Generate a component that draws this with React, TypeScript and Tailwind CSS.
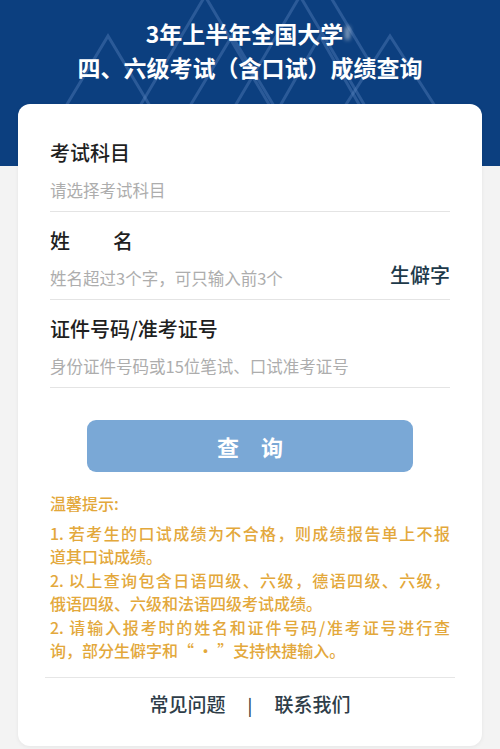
import React from "react";

const font = { fontFamily: '"Noto Sans CJK SC", "Noto Sans", sans-serif' };

const Field = ({
    label,
    placeholder,
    extra,
}: {
    label: React.ReactNode;
    placeholder: string;
    extra?: string;
}) => (
    <div className="border-b border-[#e4e4e4] pt-[15px] pb-[7px]">
        <div className="h-[28px] text-[20px] font-medium leading-[28px] text-[#1f1f1f]">{label}</div>
        <div className="mt-[9px] flex h-[28px] items-center justify-between">
            <span className="text-[16.5px] text-[#adadad]">{placeholder}</span>
            {extra && <span className="-mt-[6px] text-[20px] font-medium text-[#1d3a4a]">{extra}</span>}
        </div>
    </div>
);

const tipLines: { text: string; full: boolean }[] = [
    { text: "1. 若考生的口试成绩为不合格，则成绩报告单上不报", full: true },
    { text: "道其口试成绩。", full: false },
    { text: "2. 以上查询包含日语四级、六级，德语四级、六级，", full: true },
    { text: "俄语四级、六级和法语四级考试成绩。", full: false },
    { text: "2. 请输入报考时的姓名和证件号码/准考证号进行查", full: true },
    { text: "询，部分生僻字和“ · ”支持快捷输入。", full: false },
];

const App = () => {
    return (
        <div className="min-h-[749px] bg-[#f3f3f3]" style={font}>
            {/* blue header */}
            <div className="relative h-[166px] overflow-hidden bg-[#0c3f7f]">
                <svg
                    className="pointer-events-none absolute inset-0"
                    width="500"
                    height="166"
                    viewBox="0 0 500 166"
                    fill="none"
                    stroke="#5a84bf"
                    strokeOpacity="0.4"
                    strokeWidth="3"
                >
                    <polyline points="66,106 108,36 150,106" />
                    <polyline points="140,106 205,-4 270,106" />
                    <polyline points="190,106 232,36 274,106" />
                    <polyline points="235,106 300,-4 365,106" />
                    <polyline points="280,106 320,36 360,106" />
                    <polyline points="345,106 390,36 435,106" />
                    <polyline points="330,-4 372,66" />
                </svg>
                <div className="relative pt-[16px] text-center text-[23px] font-bold leading-[34px] text-white">
                    <div className="flex items-center justify-center pr-[4px]">
                        <span>3年上半年全国大学</span>
                        <span className="ml-[2px] h-[14px] w-[5px] rounded-full bg-white/50 blur-[2px]" />
                    </div>
                    <div>四、六级考试（含口试）成绩查询</div>
                </div>
            </div>

            {/* card */}
            <div className="relative mx-[18px] -mt-[62px] rounded-[12px] bg-white px-[32px] pt-[20px] pb-[14px] shadow-[0_1px_4px_rgba(0,0,0,0.06)]">
                <Field label="考试科目" placeholder="请选择考试科目" />
                <Field
                    label={
                        <span className="flex w-[83px] justify-between">
                            <span>姓</span>
                            <span>名</span>
                        </span>
                    }
                    placeholder="姓名超过3个字，可只输入前3个"
                    extra="生僻字"
                />
                <Field label="证件号码/准考证号" placeholder="身份证件号码或15位笔试、口试准考证号" />

                <div className="mt-[32px] flex justify-center">
                    <button className="flex h-[52px] w-[326px] items-center justify-center gap-[22px] rounded-[9px] bg-[#7aa8d6] text-[22px] font-bold text-white">
                        <span>查</span>
                        <span>询</span>
                    </button>
                </div>

                <div className="mt-[20px] text-[16px] font-medium leading-[23.5px] text-[#e3a83b]">
                    <div className="mb-[6px]">温馨提示:</div>
                    {tipLines.map((l, i) => (
                        <div
                            key={i}
                            className={l.full ? "text-justify [text-align-last:justify]" : ""}
                        >
                            {l.text}
                        </div>
                    ))}
                </div>

                <div className="-mx-[5px] mt-[14px] border-t border-[#e6e6e6]" />

                <div className="flex h-[54px] items-center justify-center text-[19px] font-medium text-[#2e3d48]">
                    <span>常见问题</span>
                    <span className="mx-[22px] text-[17px]">|</span>
                    <span>联系我们</span>
                </div>
            </div>
        </div>
    );
};

export default App;
